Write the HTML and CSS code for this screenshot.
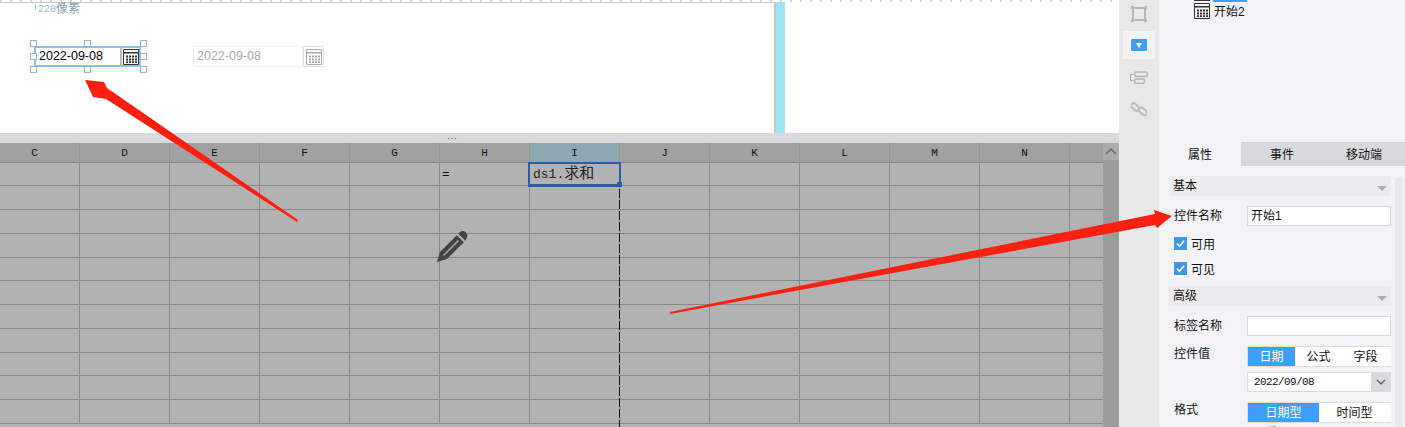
FILE: index.html
```html
<!DOCTYPE html>
<html lang="zh-CN">
<head>
    <meta charset="UTF-8">
    <meta name="viewport" content="width=device-width, initial-scale=1.0">
    <title>日期控件</title>
    <link rel="stylesheet" href="styles.css">
</head>
<body>
    <svg class="defs" width="0" height="0">
        <symbol id="cal" viewBox="0 0 16 16">
            <path d="M.5 .5h15v15H.5z" fill="none" stroke="currentColor"/>
            <path d="M1 3h14v1.400H1zM3 6.500h2v2H3zM6 6.500h2v2H6zM9 6.500h2v2H9zM12 6.500h2v2h-2zM3 9.500h2v2H3zM6 9.500h2v2H6zM9 9.500h2v2H9zM12 9.500h2v2h-2zM6 12.300h2v1.700H6zM9 12.300h2v1.700H9zM12 12.300h2v1.700h-2zM3 12.300h2v1.700H3z" fill="currentColor"/>
        </symbol>
    </svg>

    <div class="app">
        <div class="main">
            <div class="canvas">
                <div class="ruler"></div>
                <div class="canvas-note"><span class="note-tick"></span><span class="note-num">220</span>像素</div>
                <div class="widgets">
                    <div class="date-widget selected">
                        <span class="date-text">2022-09-08</span>
                        <span class="date-btn"><svg width="16" height="16"><use href="#cal"/></svg></span>
                        <i class="handle h-tl"></i><i class="handle h-tc"></i><i class="handle h-tr"></i>
                        <i class="handle h-ml"></i><i class="handle h-mr"></i>
                        <i class="handle h-bl"></i><i class="handle h-bc"></i><i class="handle h-br"></i>
                    </div>
                    <div class="date-widget disabled">
                        <span class="date-text">2022-09-08</span>
                        <span class="date-btn"><svg width="16" height="16"><use href="#cal"/></svg></span>
                    </div>
                </div>
                <div class="cyan-bar"></div>
            </div>
            <div class="splitter"><span>...</span></div>
            <div class="sheet">
                <table class="grid">
                    <tr class="head"><th>C</th><th>D</th><th>E</th><th>F</th><th>G</th><th>H</th><th class="on">I</th><th>J</th><th>K</th><th>L</th><th>M</th><th>N</th><th></th></tr>
                    <tr class="short"><td></td><td></td><td></td><td></td><td></td><td class="eq">=</td><td class="cur"><span class="cur-text">ds1.<span class="cur-cjk">求和</span></span><div class="cur-box"><i></i></div></td><td></td><td></td><td></td><td></td><td></td><td></td></tr>
                    <tr><td></td><td></td><td></td><td></td><td></td><td></td><td></td><td></td><td></td><td></td><td></td><td></td><td></td></tr>
                    <tr><td></td><td></td><td></td><td></td><td></td><td></td><td></td><td></td><td></td><td></td><td></td><td></td><td></td></tr>
                    <tr><td></td><td></td><td></td><td></td><td></td><td></td><td></td><td></td><td></td><td></td><td></td><td></td><td></td></tr>
                    <tr class="short"><td></td><td></td><td></td><td></td><td></td><td></td><td></td><td></td><td></td><td></td><td></td><td></td><td></td></tr>
                    <tr><td></td><td></td><td></td><td></td><td></td><td></td><td></td><td></td><td></td><td></td><td></td><td></td><td></td></tr>
                    <tr><td></td><td></td><td></td><td></td><td></td><td></td><td></td><td></td><td></td><td></td><td></td><td></td><td></td></tr>
                    <tr><td></td><td></td><td></td><td></td><td></td><td></td><td></td><td></td><td></td><td></td><td></td><td></td><td></td></tr>
                    <tr class="short"><td></td><td></td><td></td><td></td><td></td><td></td><td></td><td></td><td></td><td></td><td></td><td></td><td></td></tr>
                    <tr><td></td><td></td><td></td><td></td><td></td><td></td><td></td><td></td><td></td><td></td><td></td><td></td><td></td></tr>
                    <tr><td></td><td></td><td></td><td></td><td></td><td></td><td></td><td></td><td></td><td></td><td></td><td></td><td></td></tr>
                </table>
                <div class="vscroll">
                    <div class="vscroll-up">
                        <svg width="12" height="7" viewBox="0 0 12 7"><path d="M1 6l5-5 5 5" fill="none" stroke="#5c5c5c" stroke-width="1.200"/></svg>
                    </div>
                </div>
                <div class="page-break"></div>
            </div>
        </div>

        <div class="tool-strip">
            <div class="tool">
                <svg width="16" height="16" viewBox="0 0 16 16"><path d="M2 2h12v12H2z" fill="none" stroke="#b8b8b8" stroke-width="2"/><path d="M0 0h3v3H0zM13 0h3v3h-3zM0 13h3v3H0zM13 13h3v3h-3z" fill="#b8b8b8"/></svg>
            </div>
            <div class="tool tool-on"><span class="tool-blue"><svg width="6" height="5" viewBox="0 0 6 5"><path d="M0 0h6L3 5z" fill="#fff"/></svg></span></div>
            <div class="tool">
                <svg width="18" height="13" viewBox="0 0 18 13"><path d="M3 3.500H.5v6H3" fill="none" stroke="#aaa"/><rect x="4.500" y="1" width="13" height="4.500" rx="2" fill="none" stroke="#b8b8b8" stroke-width="1.600"/><rect x="4.500" y="8" width="10" height="4.500" rx="2" fill="none" stroke="#b8b8b8" stroke-width="1.600"/></svg>
            </div>
            <div class="tool">
                <svg width="16" height="16" viewBox="0 0 16 16"><g fill="none" stroke="#bbb" stroke-width="2"><rect x="-.5" y="3.500" width="9" height="5" rx="2.500" transform="rotate(42 4 6)"/><rect x="7.500" y="8" width="9" height="5" rx="2.500" transform="rotate(42 12 10.500)"/></g></svg>
            </div>
        </div>

        <div class="panel">
            <div class="tree">
                <div class="tree-prev"><span class="tree-prev-icon"></span><span class="tree-prev-label"></span></div>
                <div class="tree-item"><svg class="tree-cal" width="16" height="16"><use href="#cal"/></svg><span class="tree-text">开始2</span></div>
            </div>
            <div class="tabs">
                <div class="tab tab-on">属性</div>
                <div class="tab">事件</div>
                <div class="tab">移动端</div>
            </div>
            <div class="props">
                <div class="props-body">
                    <div class="section">基本<i class="caret"></i></div>
                    <div class="row row-name">
                        <label class="row-label">控件名称</label>
                        <div class="field">开始1</div>
                    </div>
                    <div class="check"><span class="check-box"><svg width="13" height="13" viewBox="0 0 13 13"><path d="M3 6.500l2.500 2.700L10 3.800" fill="none" stroke="#fff" stroke-width="1.600"/></svg></span>可用</div>
                    <div class="check"><span class="check-box"><svg width="13" height="13" viewBox="0 0 13 13"><path d="M3 6.500l2.500 2.700L10 3.800" fill="none" stroke="#fff" stroke-width="1.600"/></svg></span>可见</div>
                    <div class="section section-adv">高级<i class="caret"></i></div>
                    <div class="row row-tag">
                        <label class="row-label">标签名称</label>
                        <div class="field"></div>
                    </div>
                    <div class="row row-value">
                        <label class="row-label">控件值</label>
                        <div class="value-col">
                            <div class="seg">
                                <span class="seg-item seg-on">日期</span><span class="seg-item">公式</span><span class="seg-item">字段</span>
                            </div>
                            <div class="date-select">
                                <span class="date-select-text">2022/09/08</span>
                                <span class="date-select-btn"><svg width="10" height="6" viewBox="0 0 10 6"><path d="M1 1l4 4 4-4" fill="none" stroke="#555" stroke-width="1.200"/></svg></span>
                            </div>
                        </div>
                    </div>
                    <div class="row row-format">
                        <label class="row-label">格式</label>
                        <div class="value-col">
                            <div class="seg seg-two">
                                <span class="seg-item seg-on">日期型</span><span class="seg-item">时间型</span>
                            </div>
                            <div class="cut-text">日期</div>
                        </div>
                    </div>
                </div>
                <div class="props-scroll"></div>
            </div>
        </div>
    </div>

    <!-- annotations drawn over the screenshot -->
    <svg class="arrows" width="1405" height="427" viewBox="0 0 1405 427">
        <path d="M85 80L104 82L107 88L298 220L297 222L106 99L93 97Z" fill="#ff2011"/>
        <path d="M670 312L1155 214L1154 210L1172 216L1157 228L1155 225L670 314Z" fill="#ff2011"/>
    </svg>
    <svg class="pencil" width="32" height="32" viewBox="0 0 32 32">
        <path d="M1 31L3.900 21.100L20.800 4.200L27.800 11.200L10.900 28.100Z" fill="#444"/>
        <path d="M7.500 24.500L22.500 9.500" stroke="#a8a8a8" stroke-width="1.500"/>
        <path d="M22.300 2.700L24 1C26 -.500 28.500 0 30 1.500S32 5.500 30.500 7.500L29.300 9.700Z" fill="#444"/>
    </svg>
</body>
</html>
```

FILE: styles.css
```css
html, body {
    margin: 0;
    padding: 0;
}
body {
    position: relative;
    width: 1405px;
    height: 427px;
    overflow: hidden;
    font-family: 'Liberation Sans', 'Noto Sans CJK SC', sans-serif;
    font-size: 12px;
    color: #111;
    background-color: #fff;
}
.defs {
    position: absolute;
}
.app {
    display: flex;
    height: 427px;
}

/* left column */
.main {
    width: 1119px;
    display: flex;
    flex-direction: column;
    overflow: hidden;
}
.canvas {
    position: relative;
    height: 133px;
    flex-shrink: 0;
    background-color: #fff;
}
.ruler {
    height: 3px;
    background:
        linear-gradient(#c8c8c8, #c8c8c8) 0 2px / 774px 1px no-repeat,
        repeating-linear-gradient(90deg, #d4d4d4 0, #d4d4d4 2px, #fff 2px, #fff 10px) 0 0 / 100% 2px no-repeat;
}
.canvas-note {
    height: 11px;
    margin-top: 1px;
    padding-left: 35px;
    font-size: 12px;
    line-height: 11px;
    color: #8a9fb0;
    display: flex;
    align-items: center;
}
.note-tick {
    width: 1px;
    height: 5px;
    margin: -4px 2px 0 0;
    background-color: #a9bccb;
}
.note-num {
    font-family: 'Liberation Mono', monospace;
    font-size: 10px;
    color: #9cb9dc;
}
.widgets {
    display: flex;
    gap: 52px;
    padding: 31px 0 0 34px;
}
.date-widget {
    display: flex;
    position: relative;
    box-sizing: border-box;
    height: 21px;
}
.date-widget.selected {
    width: 107px;
    border: 2px solid #8cc1f2;
}
.date-widget.disabled {
    width: 131px;
    color: #aaa;
}
.date-text {
    flex: 1;
    padding-left: 3px;
    font-size: 12.500px;
    line-height: 17px;
}
.selected .date-text {
    color: #000;
}
.selected .date-btn {
    width: 19px;
    border-left: 2px solid #bbb;
    box-sizing: border-box;
    display: flex;
    align-items: center;
    justify-content: center;
    color: #333;
}
.disabled .date-text {
    border: 1px solid #eee;
    padding-left: 3px;
    line-height: 19px;
}
.disabled .date-btn {
    width: 21px;
    box-sizing: border-box;
    border: 1px solid #ddd;
    border-radius: 2px;
    display: flex;
    align-items: center;
    justify-content: center;
    color: #aaa;
}
.handle {
    position: absolute;
    width: 5px;
    height: 5px;
    border: 1px solid #94b4cf;
    background-color: #fff;
}
.h-tl { left: -6px; top: -8px; }
.h-tc { left: 48px; top: -8px; }
.h-tr { right: -8px; top: -8px; }
.h-ml { left: -6px; top: 5px; }
.h-mr { right: -8px; top: 5px; }
.h-bl { left: -6px; bottom: -8px; }
.h-bc { left: 48px; bottom: -8px; }
.h-br { right: -8px; bottom: -8px; }
.cyan-bar {
    position: absolute;
    left: 774px;
    top: 2px;
    bottom: 0;
    width: 9px;
    border-left: 2px solid #c8c8c8;
    background-color: #9be4f5;
}
.splitter {
    height: 10px;
    flex-shrink: 0;
    background-color: #d9d9db;
    text-align: center;
    padding-right: 214px;
    box-sizing: border-box;
    font-size: 9px;
    line-height: 6px;
    letter-spacing: 1px;
    color: #666;
}
.sheet {
    position: relative;
    flex: 1;
    background-color: #b2b2b2;
    overflow: hidden;
}
.grid {
    border-collapse: separate;
    border-spacing: 0;
    table-layout: fixed;
    width: 1114px;
    margin-left: -10px;
    font-family: 'Liberation Mono', 'Noto Sans CJK SC', monospace;
}
.grid th, .grid td {
    width: 90px;
    padding: 0;
    border-right: 1px solid #888;
    border-bottom: 1px solid #888;
    box-sizing: border-box;
}
.grid th:last-child, .grid td:last-child {
    width: 34px;
    border-right: 0;
}
.grid tr {
    height: 24px;
}
.grid tr.head {
    height: 20px;
}
.grid tr.short {
    height: 23px;
}
.grid th {
    background-color: #a1a1a1;
    font-size: 11px;
    font-weight: normal;
    color: #111;
    border-right-color: #959595;
}
.grid th.on {
    background-color: #8fa7b0;
}
.eq {
    font-size: 13px;
    padding-left: 2px !important;
    color: #111;
}
.cur {
    position: relative;
}
.cur-text {
    font-size: 13px;
    padding-left: 3px;
    color: #222;
    position: relative;
    top: -2px;
}
.cur-cjk {
    font-size: 15px;
}
.cur-box {
    position: absolute;
    left: -2px;
    top: -1px;
    right: -2px;
    bottom: -2px;
    border: 2px solid #2a5ca8;
    border-bottom-width: 3px;
}
.cur-box i {
    position: absolute;
    right: -3px;
    bottom: -3px;
    width: 5px;
    height: 5px;
    background-color: #2a5ca8;
}
.page-break {
    position: absolute;
    left: 619px;
    top: 46px;
    bottom: 0;
    width: 1px;
    background: repeating-linear-gradient(180deg, #111 0, #111 9px, transparent 9px, transparent 11px);
}
.vscroll {
    position: absolute;
    right: 0;
    top: 0;
    bottom: 0;
    width: 16px;
    background-color: #9b9b9b;
}
.vscroll-up {
    height: 17px;
    background-color: #ababab;
    display: flex;
    align-items: center;
    justify-content: center;
}

/* icon strip */
.tool-strip {
    width: 40px;
    flex-shrink: 0;
    background-color: #e8e8e8;
    display: flex;
    flex-direction: column;
    align-items: center;
    box-sizing: border-box;
}
.tool {
    width: 32px;
    height: 28px;
    margin-bottom: 4px;
    display: flex;
    align-items: center;
    justify-content: center;
}
.tool-strip .tool:first-child {
    height: 27px;
    margin-bottom: 4px;
}
.tool-on {
    background-color: #f3f3f6;
}
.tool-blue {
    width: 16px;
    height: 12px;
    border-radius: 1px;
    background-color: #409eff;
    display: flex;
    align-items: center;
    justify-content: center;
}

/* right panel */
.panel {
    flex: 1;
    background-color: #f3f3f6;
    display: flex;
    flex-direction: column;
    overflow: hidden;
}
.tree {
    height: 142px;
    flex-shrink: 0;
    box-sizing: border-box;
    padding-left: 35px;
}
.tree-prev {
    display: flex;
    height: 3px;
    gap: 3px;
}
.tree-prev-icon {
    width: 16px;
    height: 1px;
    background-color: #333;
}
.tree-prev-label {
    width: 34px;
    height: 2px;
    background-color: #409eff;
}
.tree-item {
    display: flex;
    align-items: center;
    height: 16px;
}
.tree-cal {
    color: #333;
    margin-right: 4px;
}
.tree-text {
    margin-bottom: 2px;
}
.tabs {
    display: flex;
    height: 24px;
    flex-shrink: 0;
    background-color: #d8d9dd;
    line-height: 26px;
    text-align: center;
}
.tab {
    flex: 1;
}
.tab-on {
    background-color: #f3f3f6;
}
.props {
    display: flex;
    flex: 1;
    padding: 10px 2px 0 10px;
}
.props-body {
    width: 222px;
    margin-right: 4px;
}
.props-scroll {
    width: 8px;
    background-color: #e9e9ec;
    border-radius: 4px 4px 0 0;
    margin-top: 1px;
}
.section {
    height: 20px;
    line-height: 18px;
    padding-left: 4px;
    background-color: #ebebed;
    display: flex;
    justify-content: space-between;
    align-items: center;
}
.caret {
    width: 0;
    height: 0;
    margin: 4px 4px 0 0;
    border: 5px solid transparent;
    border-bottom: 0;
    border-top: 5px solid #aeaeae;
}
.section-adv {
    margin-top: 5px;
}
.row {
    display: flex;
    padding-left: 5px;
}
.row-label {
    width: 73px;
    flex-shrink: 0;
}
.row-name {
    margin-top: 10px;
    margin-bottom: 5px;
    line-height: 20px;
}
.row-tag {
    margin-top: 10px;
    line-height: 20px;
}
.field {
    flex: 1;
    height: 20px;
    box-sizing: border-box;
    border: 1px solid #d8d8dc;
    background-color: #fff;
    padding-left: 3px;
    line-height: 18px;
}
.check {
    display: flex;
    align-items: center;
    height: 25px;
    padding: 0 0 1px 5px;
    box-sizing: border-box;
}
.check-box {
    width: 13px;
    height: 13px;
    margin-right: 4px;
    background-color: #3f97ee;
    display: flex;
}
.row-value {
    margin-top: 10px;
}
.row-value .row-label, .row-format .row-label {
    line-height: 16px;
}
.value-col {
    flex: 1;
    min-width: 0;
}
.seg {
    display: flex;
    height: 21px;
    box-sizing: border-box;
    border: 1px solid #ddd;
    border-width: 1px 0 1px 1px;
    background-color: #fff;
    line-height: 21px;
    text-align: center;
}
.seg-item {
    width: 47px;
}
.seg-on {
    background-color: #409eff;
    color: #fff;
}
.seg-two .seg-item {
    width: 71px;
}
.date-select {
    display: flex;
    height: 20px;
    margin-top: 5px;
    box-sizing: border-box;
    border: 1px solid #ddd;
    background-color: #fff;
}
.date-select-text {
    flex: 1;
    padding-left: 6px;
    line-height: 18px;
    font-family: 'Liberation Mono', monospace;
    font-size: 11px;
    letter-spacing: -0.600px;
}
.date-select-btn {
    width: 19px;
    background-color: #d8d9dd;
    display: flex;
    align-items: center;
    justify-content: center;
}
.row-format {
    margin-top: 10px;
}
.cut-text {
    padding-left: 8px;
    font-size: 11px;
    color: #888;
}

/* overlays */
.arrows {
    position: absolute;
    left: 0;
    top: 0;
    pointer-events: none;
}
.pencil {
    position: absolute;
    left: 436px;
    top: 231px;
}
```
